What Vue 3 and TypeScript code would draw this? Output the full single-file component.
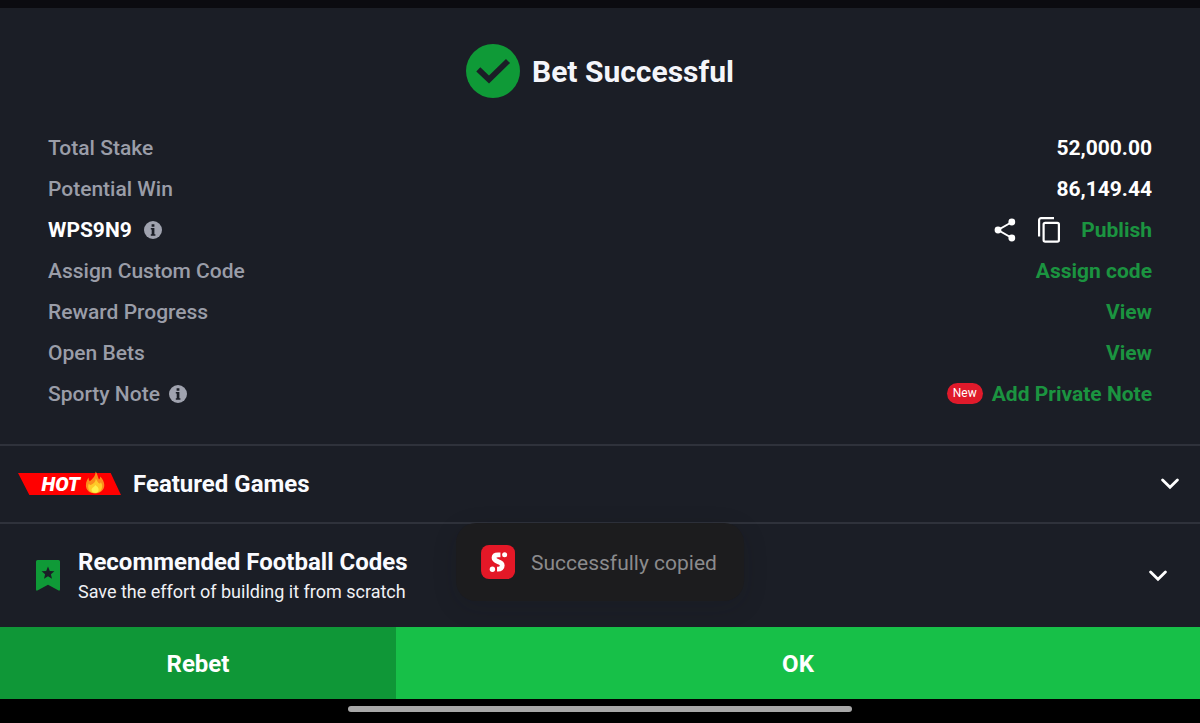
<script setup lang="ts">
import { ref } from 'vue'

interface BetRow {
  id: string
  label: string
  strong?: boolean
  info?: boolean
  value?: string
  action?: string
  share?: boolean
  badge?: string
}

const rows: BetRow[] = [
  { id: 'stake', label: 'Total Stake', value: '52,000.00' },
  { id: 'win', label: 'Potential Win', value: '86,149.44' },
  { id: 'code', label: 'WPS9N9', strong: true, info: true, share: true, action: 'Publish' },
  { id: 'custom', label: 'Assign Custom Code', action: 'Assign code' },
  { id: 'reward', label: 'Reward Progress', action: 'View' },
  { id: 'open', label: 'Open Bets', action: 'View' },
  { id: 'note', label: 'Sporty Note', info: true, badge: 'New', action: 'Add Private Note' },
]

const toast = ref('Successfully copied')
</script>

<template>
  <div class="screen">
    <div class="top-strip"></div>
    <main class="sheet">
      <header class="heading">
        <svg class="check" viewBox="0 0 54 54" aria-hidden="true">
          <circle cx="27" cy="27" r="27" fill="#0f9a37" />
          <path d="M12.3 25.3 L23 35.5 L42 17" fill="none" stroke="#1b1e26" stroke-width="5.8" />
        </svg>
        <h1>Bet Successful</h1>
      </header>

      <ul class="rows">
        <li v-for="row in rows" :key="row.id" class="row">
          <div class="label" :class="{ strong: row.strong }">
            <span>{{ row.label }}</span>
            <button v-if="row.info" type="button" class="icon-btn" :aria-label="`About ${row.label}`">
              <svg class="info" viewBox="0 0 18 18" aria-hidden="true">
                <circle cx="9" cy="9" r="9" fill="#a0a3af" />
                <path d="M7.6 3.2h2.8v2.5H7.6z M6.8 7.1h3.6v6.1h1v1.5H6.8v-1.5h0.9V8.6H6.8z" fill="#1b1e26" />
              </svg>
            </button>
          </div>
          <div class="side">
            <template v-if="row.share">
              <button type="button" class="icon-btn share-btn" aria-label="Share">
                <svg class="share" viewBox="0 0 22 24" aria-hidden="true">
                  <path d="M18 4 L4 12 L18 20" fill="none" stroke="#fff" stroke-width="2" />
                  <circle cx="17.8" cy="4" r="3.4" fill="#fff" />
                  <circle cx="4" cy="12" r="3.4" fill="#fff" />
                  <circle cx="17.8" cy="20" r="3.4" fill="#fff" />
                </svg>
              </button>
              <button type="button" class="icon-btn copy-btn" aria-label="Copy code">
                <svg class="copy" viewBox="0 0 22 26" aria-hidden="true">
                  <path d="M16 1.1 H3.1 A2 2 0 0 0 1.1 3.1 V19.5" fill="none" stroke="#fff" stroke-width="2.2" />
                  <rect x="5.6" y="5.9" width="15.3" height="18.8" rx="1.6" fill="none" stroke="#fff" stroke-width="2.2" />
                </svg>
              </button>
            </template>
            <span v-if="row.badge" class="badge">{{ row.badge }}</span>
            <span v-if="row.value" class="value">{{ row.value }}</span>
            <button v-if="row.action" type="button" class="action">{{ row.action }}</button>
          </div>
        </li>
      </ul>

      <button type="button" class="panel featured">
        <span class="hot">
          <span class="hot-text">HOT</span>
          <svg class="flame" viewBox="0 0 20 23" aria-hidden="true">
            <path d="M10.6 0.5 C12.6 3 12.4 5.4 14 8.4 C14.9 8 15.2 6.8 15.1 5.4 C17.6 7.6 19.3 10.8 19.3 14 C19.3 19 15.4 22.4 10.2 22.4 C4.8 22.4 0.9 19.2 0.9 14.2 C0.9 10.4 2.4 8.2 3.6 6.4 C3.6 8 4 9.6 5 10.2 C7.2 8 10.8 5 10.6 0.5Z" fill="#fb8c1c" />
            <path d="M10.8 7.6 C12.6 10.6 13 12.2 14.6 12.6 C15.6 12.6 15.8 11.6 15.8 11 C17 13 17.4 14.6 17 16.6 C16.4 20 13.8 22 10.2 22 C6.2 22 3.4 20 3.2 16.2 C3.1 14.6 3.4 13.4 4 12.4 C4.4 13.6 5.2 14.2 6.2 13.8 C8.6 12.8 10.8 11 10.8 7.6Z" fill="#ffc928" />
            <path d="M10.2 14 C12.4 15.6 14 17 13.6 19.2 C13.2 21 11.8 21.8 10.2 21.8 C8.2 21.8 6.8 20.8 6.6 19 C6.4 17 9.4 16.2 10.2 14Z" fill="#fff04d" />
          </svg>
        </span>
        <span class="panel-title">Featured Games</span>
        <svg class="chevron" viewBox="0 0 18 12" aria-hidden="true">
          <path d="M1.6 2 L9 9.3 L16.4 2" fill="none" stroke="#fff" stroke-width="2.8" stroke-linecap="round" />
        </svg>
      </button>

      <button type="button" class="panel codes">
        <svg class="bookmark" viewBox="0 0 24 31" aria-hidden="true">
          <path d="M1.5 0 H22.5 Q24 0 24 1.5 V29.6 Q24 31 22.6 30.5 L12 24.8 L1.4 30.5 Q0 31 0 29.6 V1.5 Q0 0 1.5 0Z" fill="#0f9a37" />
          <path d="M12 6.6 L13.8 10.9 L18.4 11.2 L14.9 14.2 L16 18.8 L12 16.3 L8 18.8 L9.1 14.2 L5.6 11.2 L10.2 10.9Z" fill="#1b1e26" />
        </svg>
        <span class="panel-copy">
          <span class="panel-title">Recommended Football Codes</span>
          <span class="panel-sub">Save the effort of building it from scratch</span>
        </span>
        <svg class="chevron" viewBox="0 0 18 12" aria-hidden="true">
          <path d="M1.6 2 L9 9.3 L16.4 2" fill="none" stroke="#fff" stroke-width="2.8" stroke-linecap="round" />
        </svg>
      </button>
    </main>

    <footer class="actions">
      <button type="button" class="rebet">Rebet</button>
      <button type="button" class="ok">OK</button>
    </footer>
    <div class="home-bar"><span class="home-pill"></span></div>

    <div class="toast" role="status">
      <svg class="app-logo" viewBox="0 0 34 34" aria-hidden="true">
        <rect width="34" height="34" rx="8" fill="#e41827" />
        <path d="M19.4 9.8 H17 C14.4 9.8 13 11 13 12.8 C13 15 14.6 15.8 17 16.6 C19.6 17.5 21.2 18.4 21.2 20.6 C21.2 22.8 19.6 24.2 17 24.2 H16" fill="none" stroke="#fff" stroke-width="4.8" />
        <circle cx="23.6" cy="9.8" r="2.5" fill="#fff" />
        <circle cx="11.4" cy="24.3" r="2.7" fill="#fff" />
      </svg>
      <span>{{ toast }}</span>
    </div>
  </div>
</template>

<style>
body {
  margin: 0;
  background: #000;
}
</style>

<style scoped>
.screen {
  position: relative;
  display: flex;
  flex-direction: column;
  min-height: 100vh;
  background: #1b1e26;
  color: #fff;
  font-family: Roboto, "Liberation Sans", sans-serif;
  font-size: 21px;
  line-height: 24px;
}

button {
  margin: 0;
  padding: 0;
  border: 0;
  background: none;
  color: inherit;
  font: inherit;
  text-align: left;
  cursor: pointer;
}

svg {
  display: block;
  flex: none;
}

.top-strip {
  height: 8px;
  background: #0b0b10;
}

.sheet {
  flex: 1;
}

.heading {
  display: flex;
  align-items: center;
  justify-content: center;
  gap: 12px;
  padding: 36px 24px 29px;
}

.check {
  width: 54px;
  height: 54px;
}

h1 {
  margin: 0;
  padding-top: 2px;
  color: #f4f5fa;
  font-size: 30px;
  line-height: 36px;
  font-weight: 700;
}

.rows {
  margin: 0;
  padding: 0 48px 30px;
  list-style: none;
}

.row {
  display: flex;
  align-items: center;
  justify-content: space-between;
  height: 41px;
}

.label,
.side {
  display: flex;
  align-items: center;
}

.label {
  gap: 9px;
  color: #9a9da8;
  font-weight: 500;
}

.label.strong {
  gap: 12px;
  color: #fff;
  font-weight: 700;
}

.info {
  width: 18px;
  height: 18px;
}

.share {
  width: 22px;
  height: 24px;
}

.copy {
  width: 22px;
  height: 26px;
}

.share-btn {
  margin-right: 22px;
}

.copy-btn {
  margin-right: 21px;
}

.value {
  font-weight: 700;
}

.action {
  color: #1b9440;
  font-weight: 700;
}

.badge {
  margin-right: 9px;
  padding: 0 6px;
  border-radius: 11px;
  background: #e01a2b;
  font-size: 12px;
  line-height: 21px;
}

.panel {
  display: flex;
  align-items: center;
  width: 100%;
  border-top: 2px solid #2f323b;
}

.featured {
  height: 78px;
  padding: 0 21px 0 18px;
}

.codes {
  height: 105px;
  padding: 0 33px 0 36px;
}

.hot {
  display: flex;
  align-items: center;
  justify-content: flex-end;
  gap: 5px;
  width: 103px;
  height: 22px;
  margin-right: 12px;
  padding-right: 16px;
  box-sizing: border-box;
  background: #f00;
  clip-path: polygon(0 0, 50% 0, 50% -8px, 90% -8px, 90% 0, 100% 100%, 11% 100%);
}

.hot-text {
  font-size: 20px;
  line-height: 22px;
  font-weight: 900;
  font-style: italic;
}

.flame {
  width: 20px;
  height: 23px;
  margin-top: -4px;
}

.panel-title {
  color: #fafbff;
  font-size: 24px;
  line-height: 30px;
  font-weight: 700;
}

.bookmark {
  width: 24px;
  height: 31px;
}

.panel-copy {
  display: flex;
  flex-direction: column;
  margin-left: 18px;
  padding-top: 2px;
}

.panel-sub {
  color: #f0f1f5;
  font-size: 18px;
  line-height: 30px;
}

.chevron {
  width: 18px;
  height: 12px;
  margin-left: auto;
}

.actions {
  display: flex;
  height: 72px;
  font-size: 24px;
  line-height: 28px;
  font-weight: 700;
}

.actions button {
  padding-top: 2px;
  text-align: center;
}

.rebet {
  width: 33%;
  background: #0f9737;
}

.ok {
  flex: 1;
  background: #17c048;
}

.home-bar {
  display: flex;
  justify-content: center;
  height: 17px;
  padding-top: 7px;
  background: #000;
}

.home-pill {
  width: 42%;
  height: 6px;
  border-radius: 3px;
  background: #a8a8a8;
}

.toast {
  position: absolute;
  bottom: 122px;
  left: 50%;
  display: flex;
  align-items: center;
  gap: 16px;
  height: 78px;
  padding: 0 27px 0 25px;
  border-radius: 20px;
  background: #1c1c1e;
  box-shadow: 0 6px 24px rgba(20, 22, 28, 0.15);
  color: #8b8b8d;
  font-size: 21px;
  white-space: nowrap;
  transform: translateX(-50%);
}

.toast span {
  padding-top: 2px;
}

.app-logo {
  width: 34px;
  height: 34px;
}
</style>
